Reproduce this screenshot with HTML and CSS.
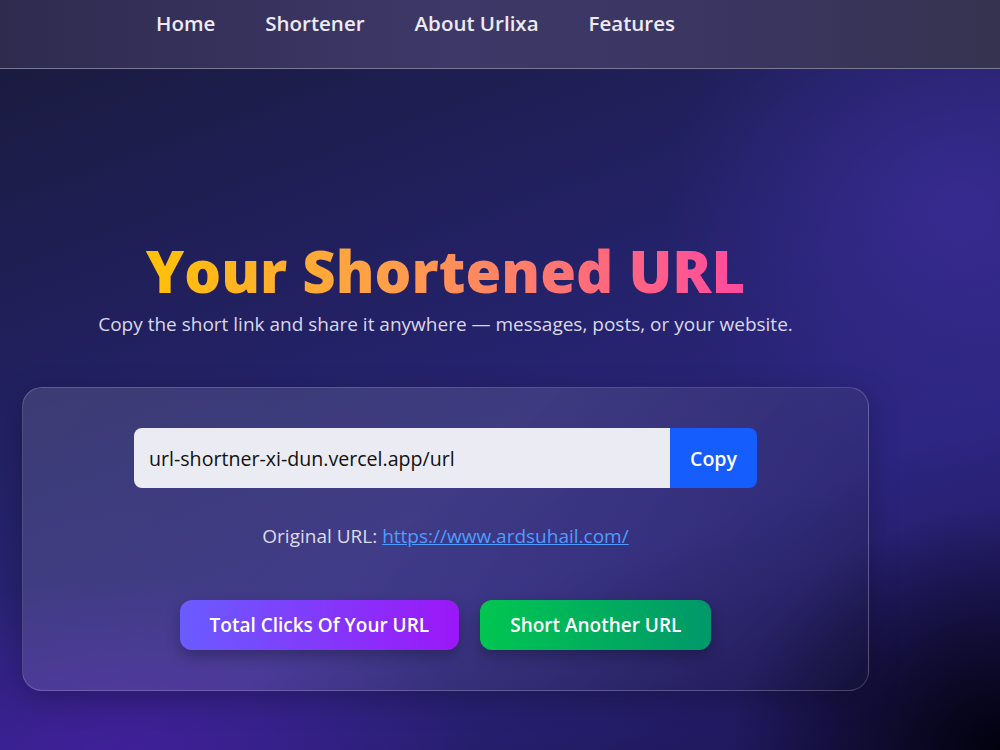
FILE: index.html
```html
<!DOCTYPE html>
<html lang="en">
<head>
    <meta charset="UTF-8">
    <meta name="viewport" content="width=device-width, initial-scale=1.0">
    <title>Urlixa - Your Shortened URL</title>
    <link rel="stylesheet" href="styles.css">
</head>
<body>

<nav class="navbar">
    <ul class="nav-links">
        <li><a href="#">Home</a></li>
        <li><a href="#">Shortener</a></li>
        <li><a href="#">About Urlixa</a></li>
        <li><a href="#">Features</a></li>
    </ul>
</nav>

<main class="result-page">
    <h1 class="result-title">Your Shortened URL</h1>
    <p class="result-subtitle">Copy the short link and share it anywhere — messages, posts, or your website.</p>

    <div class="result-card">
        <div class="copy-row">
            <input type="text" id="short-url" value="url-shortner-xi-dun.vercel.app/url" readonly>
            <button class="copy-btn" id="copy-btn">Copy</button>
        </div>

        <p class="original-url">Original URL: <a href="https://www.ardsuhail.com/">https://www.ardsuhail.com/</a></p>

        <div class="action-row">
            <button class="btn btn-clicks">Total Clicks Of Your URL</button>
            <button class="btn btn-another">Short Another URL</button>
        </div>
    </div>
</main>

</body>
</html>
```

FILE: styles.css
```css
* {
    box-sizing: border-box;
}
html, body {
    height: 100%;
}
body {
    font-family: "Open Sans", "Noto Sans", sans-serif;
    margin: 0;
    padding: 0;
    color: #fff;
    overflow: hidden;
    background-color: #15163a;
    background-image:
        radial-gradient(ellipse 420px 380px at 960px 210px, rgba(58, 44, 150, 0.85), transparent 70%),
        radial-gradient(ellipse 520px 260px at 120px 760px, rgba(70, 30, 160, 0.8), transparent 70%),
        radial-gradient(ellipse 360px 320px at 1000px 750px, rgba(0, 0, 10, 0.95), transparent 75%),
        linear-gradient(160deg, #191a3a 0%, #24226a 45%, #2c2580 70%, #1b1450 100%);
}

/* barra de navegacion */
.navbar {
    height: 69px;
    background: linear-gradient(90deg, #2e2b4f 0%, #3e3868 45%, #3a3560 75%, #35334f 100%);
    border-bottom: 1px solid #7b7896;
}
.nav-links {
    list-style: none;
    margin: 0;
    padding: 9px 0 0 156px;
    display: flex;
    gap: 50px;
}
.nav-links a {
    color: #ecebf3;
    text-decoration: none;
    font-size: 20.5px;
    font-weight: 600;
}

/* contenido principal */
.result-page {
    width: 847px;
    margin-left: 22px;
    padding-top: 173px;
    text-align: center;
}
.result-title {
    margin: 0;
    font-size: 58px;
    font-weight: 800;
    line-height: 58px;
    display: inline-block;
    background: linear-gradient(90deg, #ffc107 0%, #ff9f4a 40%, #ff6b7a 75%, #ff4aa0 100%);
    -webkit-background-clip: text;
    background-clip: text;
    color: transparent;
}
.result-subtitle {
    margin: 11px 0 0;
    font-size: 19px;
    line-height: 26px;
    color: #d9d8ea;
}

.result-card {
    margin-top: 50px;
    padding: 40px 0 40px;
    border: 1px solid rgba(255, 255, 255, 0.18);
    border-radius: 20px;
    background: linear-gradient(135deg, rgba(255, 255, 255, 0.12) 0%, rgba(255, 255, 255, 0.11) 45%, rgba(20, 20, 50, 0.25) 100%);
    box-shadow: 0 8px 30px rgba(0, 0, 0, 0.25);
}
.copy-row {
    width: 623px;
    margin: 0 auto;
    display: flex;
}
.copy-row input {
    flex: 1;
    height: 60px;
    padding: 0 15px;
    border: none;
    border-radius: 8px 0 0 8px;
    background-color: #ebebf3;
    font-family: inherit;
    font-size: 19.6px;
    font-weight: 500;
    color: #111;
    outline: none;
}
.copy-btn {
    width: 87px;
    border: none;
    border-radius: 0 8px 8px 0;
    background-color: #155dfc;
    color: white;
    font-family: inherit;
    font-size: 19.6px;
    font-weight: 600;
    cursor: pointer;
}

.original-url {
    margin: 35px 0 0;
    font-size: 19px;
    color: #dcdbec;
}
.original-url a {
    color: #4f9cff;
}

.action-row {
    margin-top: 51px;
    display: flex;
    justify-content: center;
    gap: 21px;
}
.btn {
    height: 50px;
    padding: 0 30px;
    border: none;
    border-radius: 12px;
    color: white;
    font-family: inherit;
    font-size: 19px;
    font-weight: 600;
    cursor: pointer;
    box-shadow: 0 6px 14px rgba(0, 0, 0, 0.25);
}
.btn-clicks {
    background: linear-gradient(90deg, #6a5cff 0%, #9b17f8 100%);
}
.btn-another {
    background: linear-gradient(90deg, #00c651 0%, #00986a 100%);
}
```
